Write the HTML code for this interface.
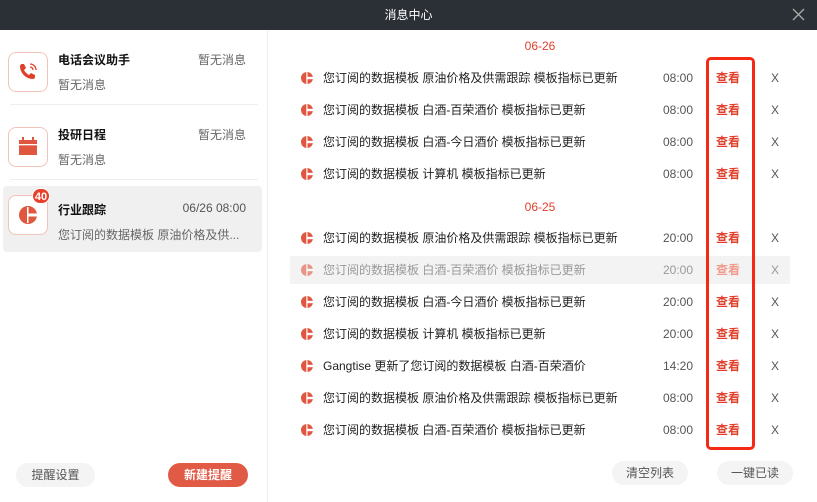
<!DOCTYPE html>
<html><head><meta charset="utf-8"><style>
*{margin:0;padding:0;box-sizing:border-box}
body{width:817px;height:502px;background:#fff;font-family:"Liberation Sans","Noto Sans CJK SC",sans-serif;position:relative;overflow:hidden;color:#222;font-size:12px}
.top{position:absolute;left:0;top:0;width:817px;height:30px;background:#2b2f36;color:#fff;text-align:center;line-height:30px;font-size:12px}
.close{position:absolute;right:12px;top:8px;width:13px;height:13px}
.left{position:absolute;left:0;top:30px;width:268px;height:472px;border-right:1px solid #eee}
.item{position:absolute;left:3px;width:259px;height:66px}
.ib{position:absolute;left:5px;top:9px;width:40px;height:40px;border:1px solid #f0c4b8;border-radius:8px;background:#fff}
.tt{position:absolute;left:55px;top:8px;font-weight:bold;font-size:12px;color:#111}
.rt{position:absolute;right:16px;top:8px;color:#666;font-size:12px}
.sub{position:absolute;left:55px;top:33px;color:#666;font-size:12px;white-space:nowrap}
.sep{position:absolute;left:10px;width:248px;height:1px;background:#eee}
.btn{position:absolute;height:24px;line-height:24px;text-align:center;border-radius:12px;background:#f4f4f4;color:#555;font-size:12px}
.date{position:absolute;left:500px;width:80px;text-align:center;color:#e0402a;font-size:12px}
.row{position:absolute;left:290px;width:500px;height:28px;line-height:28px}
.row svg{position:absolute;left:10px;top:7px}
.row .t{position:absolute;left:33px;white-space:nowrap;color:#222}
.row .tm{position:absolute;left:373px;color:#555}
.row .v{position:absolute;left:426px;color:#e0402a;font-weight:bold}
.row .x{position:absolute;left:481px;color:#555}
.hl{background:#f3f3f3}
.hl .t,.hl .tm,.hl .x{color:#999}.hl .v{color:#f09a8c}.hl svg{opacity:.6}
.box{position:absolute;left:706px;top:57px;width:49px;height:393px;border:3px solid #f52a14;border-radius:5px}
</style></head><body>
<div class="top">消息中心
<svg class="close" viewBox="0 0 13 13"><path d="M1 1L12 12M12 1L1 12" stroke="#aaa" stroke-width="1.3"/></svg></div>
<div class="left">
 <div class="item" style="top:13px">
  <div class="ib"><svg width="40" height="40" viewBox="0 0 40 40" style="position:absolute;left:-1px;top:-1px"><path d="M12 14c0-1 1-2 2-2h2l2 4-2 2c1 2 3 4 5 5l2-2 4 2v2c0 1-1 2-2 2-7 0-13-6-13-13z" fill="#e0402a"/><path d="M22 12a6 6 0 0 1 6 6M22 15a3 3 0 0 1 3 3" stroke="#e0402a" stroke-width="1.3" fill="none"/></svg></div>
  <div class="tt">电话会议助手</div><div class="rt">暂无消息</div><div class="sub">暂无消息</div></div>
 <div class="sep" style="top:74px"></div>
 <div class="item" style="top:88px">
  <div class="ib"><svg width="40" height="40" viewBox="0 0 40 40" style="position:absolute;left:-1px;top:-1px"><rect x="11" y="13" width="18" height="15" fill="#e0573f"/><rect x="14" y="10" width="2" height="5" fill="#e0573f"/><rect x="24" y="10" width="2" height="5" fill="#e0573f"/><rect x="11" y="17" width="18" height="1.3" fill="#fff"/></svg></div>
  <div class="tt">投研日程</div><div class="rt">暂无消息</div><div class="sub">暂无消息</div></div>
 <div class="sep" style="top:149px"></div>
 <div class="item" style="top:156px;background:#f0f0f0;border-radius:4px">
  <div class="ib"><svg width="40" height="40" viewBox="0 0 40 40" style="position:absolute;left:-1px;top:-1px"><circle cx="20" cy="20" r="9" fill="#e0573f"/><rect x="19" y="12" width="1.5" height="16" fill="#fff"/><rect x="20" y="18.5" width="10" height="3" fill="#fff"/></svg>
  <div style="position:absolute;left:23px;top:-8px;width:18px;height:16px;border-radius:8px;background:#e8402c;color:#fff;font-size:11px;font-weight:bold;text-align:center;line-height:16px;border:1px solid #fff">40</div></div>
  <div class="tt" style="top:15px">行业跟踪</div><div class="rt" style="color:#555;top:15px">06/26 08:00</div><div class="sub" style="top:40px">您订阅的数据模板 原油价格及供...</div></div>
 <div class="btn" style="left:16px;top:433px;width:79px">提醒设置</div>
 <div class="btn" style="left:168px;top:433px;width:80px;background:#e05a45;color:#fff;font-weight:bold">新建提醒</div>
</div>
<div class="date" style="top:39px">06-26</div>
<div class="date" style="top:200px">06-25</div>
<div id="rows"></div>
<div class="box"></div>
<div class="btn" style="left:612px;top:461px;width:76px">清空列表</div>
<div class="btn" style="left:717px;top:461px;width:76px">一键已读</div>
<script>
var d=[[78,"您订阅的数据模板 原油价格及供需跟踪 模板指标已更新","08:00"],[110,"您订阅的数据模板 白酒-百荣酒价 模板指标已更新","08:00"],[142,"您订阅的数据模板 白酒-今日酒价 模板指标已更新","08:00"],[174,"您订阅的数据模板 计算机 模板指标已更新","08:00"],[238,"您订阅的数据模板 原油价格及供需跟踪 模板指标已更新","20:00"],[270,"您订阅的数据模板 白酒-百荣酒价 模板指标已更新","20:00",1],[302,"您订阅的数据模板 白酒-今日酒价 模板指标已更新","20:00"],[334,"您订阅的数据模板 计算机 模板指标已更新","20:00"],[366,"Gangtise 更新了您订阅的数据模板 白酒-百荣酒价","14:20"],[398,"您订阅的数据模板 原油价格及供需跟踪 模板指标已更新","08:00"],[430,"您订阅的数据模板 白酒-百荣酒价 模板指标已更新","08:00"]];
var h="";d.forEach(function(r){h+='<div class="row'+(r[3]?' hl':'')+'" style="top:'+(r[0]-14)+'px"><svg width="14" height="14" viewBox="0 0 14 14"><circle cx="7" cy="7" r="6" fill="#e0573f"/><rect x="6.3" y="1" width="1.2" height="12" fill="#fff"/><rect x="7" y="5.8" width="7" height="2.4" fill="#fff"/></svg><span class="t">'+r[1]+'</span><span class="tm">'+r[2]+'</span><span class="v">查看</span><span class="x">X</span></div>'});
document.getElementById("rows").innerHTML=h;
</script>
</body></html>
